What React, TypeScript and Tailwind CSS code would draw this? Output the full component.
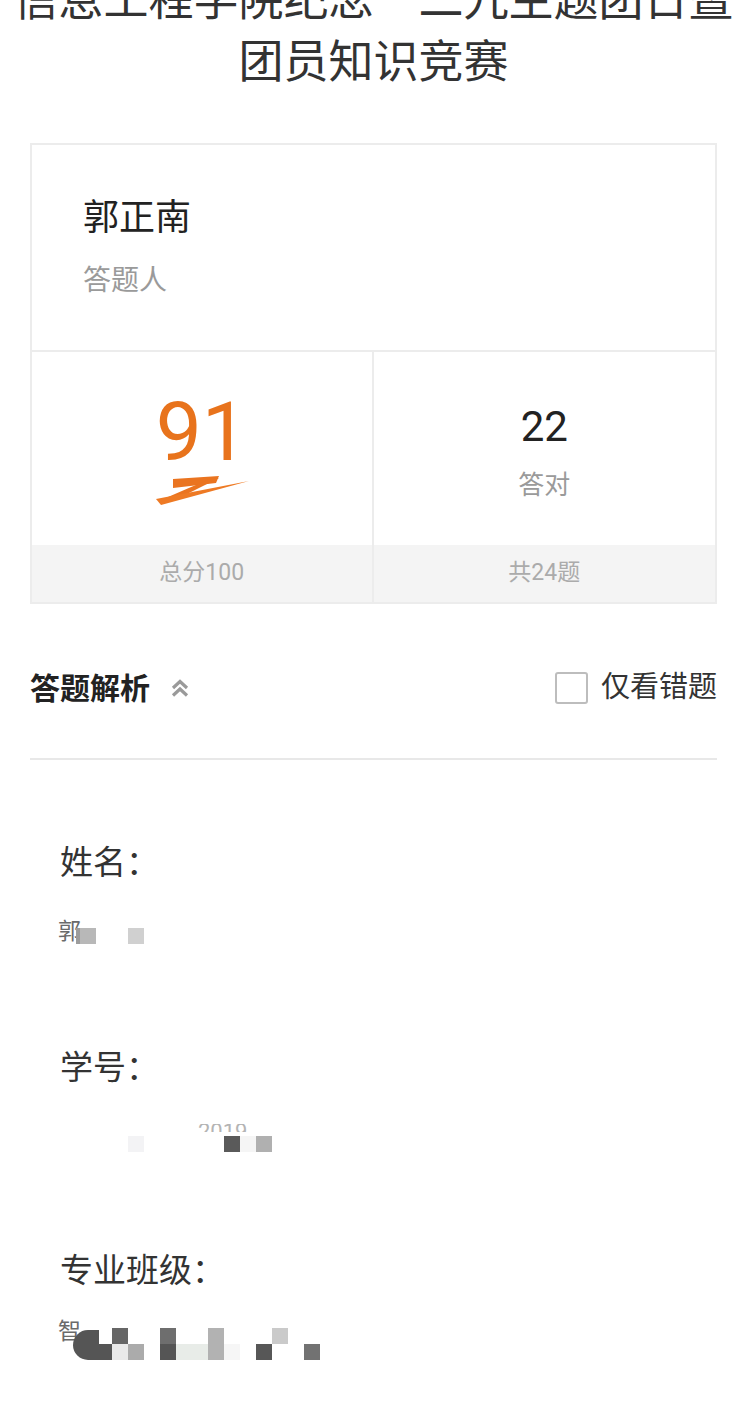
import React from "react";

type Cell = { col: number; row: number; color: string };

const nameCells: Cell[] = [
  { col: 5, row: 0, color: "#b8b8b8" },
  { col: 8, row: 0, color: "#d0d0d0" },
];

const numberCells: Cell[] = [
  { col: 8, row: 0, color: "#f3f3f5" },
  { col: 14, row: 0, color: "#5a5a5a" },
  { col: 15, row: 0, color: "#f5f5f5" },
  { col: 16, row: 0, color: "#b0b0b0" },
];

const classCells: Cell[] = [
  { col: 7, row: 0, color: "#666666" },
  { col: 10, row: 0, color: "#6e6e6e" },
  { col: 13, row: 0, color: "#b2b2b2" },
  { col: 17, row: 0, color: "#cacaca" },
  { col: 6, row: 1, color: "#555555" },
  { col: 7, row: 1, color: "#e9e9e9" },
  { col: 8, row: 1, color: "#ababab" },
  { col: 10, row: 1, color: "#555555" },
  { col: 11, row: 1, color: "#e8ece8" },
  { col: 12, row: 1, color: "#e8ece8" },
  { col: 13, row: 1, color: "#b2b2b2" },
  { col: 14, row: 1, color: "#f6f6f6" },
  { col: 16, row: 1, color: "#575757" },
  { col: 19, row: 1, color: "#727272" },
];

function Mosaic({ cells }: { cells: Cell[] }) {
  return (
    <>
      {cells.map((cell) => (
        <div
          key={`${cell.col}-${cell.row}`}
          className="absolute h-[16px] w-[16px]"
          style={{ left: cell.col * 16, top: 12 + cell.row * 16, backgroundColor: cell.color }}
        />
      ))}
    </>
  );
}

function ScoreMark() {
  return (
    <svg className="h-[40px] w-[100px]" viewBox="0 0 100 40">
      <polygon points="21,6 67,3 64,10 21,15" fill="#ea7420" />
      <polygon points="60,5 67,5 25,26 16,24" fill="#ea7420" />
      <polygon points="4,26 97,8 9,32" fill="#ee7a24" />
    </svg>
  );
}

function DoubleChevronUp() {
  return (
    <svg className="h-[20px] w-[20px]" viewBox="0 0 20 20" fill="none" stroke="#9a9a9a" strokeWidth="3.2">
      <polyline points="3,10 10,3.5 17,10" />
      <polyline points="3,17.5 10,11 17,17.5" />
    </svg>
  );
}

function Field({
  label,
  first,
  cells,
  children,
  labelGap,
  rowGap,
  tall,
}: {
  label: string;
  first?: string;
  cells: Cell[];
  children?: React.ReactNode;
  labelGap: string;
  rowGap: string;
  tall?: boolean;
}) {
  return (
    <div className={labelGap}>
      <div className="pl-[60px] text-[33px] leading-[40px] text-[#333]">{label}</div>
      <div className={`relative ${rowGap} ${tall ? "h-[48px]" : "h-[32px]"}`}>
        {first ? (
          <span className="ml-[58px] text-[23px] leading-[32px] text-[#6a6a6a]">{first}</span>
        ) : null}
        <Mosaic cells={cells} />
        {children}
      </div>
    </div>
  );
}

export default function App() {
  return (
    <div className="min-h-[1423px] overflow-hidden bg-white font-[Roboto,'Noto_Sans_CJK_SC',sans-serif] text-[#333]">
      <div className="-mt-[34px] text-center font-['Noto_Sans_CJK_SC',sans-serif] text-[45px] leading-[62px] text-[#333]">
        <div className="whitespace-nowrap">
          信息工程学院纪念<span className="inline-block w-[45px] text-right">“</span>二九主题团日暨
        </div>
        <div>团员知识竞赛</div>
      </div>

      <div className="mx-[30px] mt-[53px] border-2 border-[#ececec]">
        <div className="h-[207px] border-b-2 border-[#ececec] pl-[51px] pt-[51px]">
          <div className="text-[36px] leading-[44px] text-[#222]">郭正南</div>
          <div className="mt-[24px] text-[28px] leading-[34px] text-[#9a9a9a]">答题人</div>
        </div>
        <div className="grid grid-cols-2">
          <div className="flex flex-col border-r-2 border-[#ececec]">
            <div className="flex h-[193px] flex-col items-center pt-[39px]">
              <div className="text-[82px] leading-[82px] text-[#e8731c]">91</div>
              <ScoreMark />
            </div>
            <div className="flex h-[57px] items-center justify-center bg-[#f4f4f4] text-[23px] text-[#ababab]">
              总分100
            </div>
          </div>
          <div className="flex flex-col">
            <div className="flex h-[193px] flex-col items-center pt-[54px]">
              <div className="text-[42px] leading-[42px] text-[#222]">22</div>
              <div className="mt-[21px] text-[26px] leading-[32px] text-[#9a9a9a]">答对</div>
            </div>
            <div className="flex h-[57px] items-center justify-center bg-[#f4f4f4] text-[23px] text-[#ababab]">
              共24题
            </div>
          </div>
        </div>
      </div>

      <div className="mx-[30px] mt-[54px] border-b-2 border-[#e8e8e8] pb-[40px]">
        <div className="flex h-[60px] items-center justify-between">
          <div className="flex items-center gap-[20px]">
            <span className="text-[30px] font-bold text-[#222]">答题解析</span>
            <DoubleChevronUp />
          </div>
          <label className="flex items-center gap-[13px]">
            <span className="h-[32px] w-[33px] rounded-[3px] border-2 border-[#bdbdbd] bg-white" />
            <span className="text-[29px] text-[#333]">仅看错题</span>
          </label>
        </div>
      </div>

      <Field label="姓名：" first="郭" cells={nameCells} labelGap="mt-[83px]" rowGap="mt-[33px]">
        <div className="absolute left-[76px] top-[12px] h-[16px] w-[4px] bg-[#9c9c9c]" />
      </Field>

      <Field label="学号：" cells={numberCells} labelGap="mt-[100px]" rowGap="mt-[36px]">
        <div className="absolute left-[198px] top-[0px] h-[8px] overflow-hidden">
          <div className="-mt-[5px] text-[22px] leading-[26px] text-[#b4b4b4]">2019</div>
        </div>
      </Field>

      <Field label="专业班级：" first="智" cells={classCells} labelGap="mt-[95px]" rowGap="mt-[25px]" tall>
        <div className="absolute left-[73px] top-[14px] h-[30px] w-[26px] rounded-l-full bg-[#555]" />
      </Field>
    </div>
  );
}
